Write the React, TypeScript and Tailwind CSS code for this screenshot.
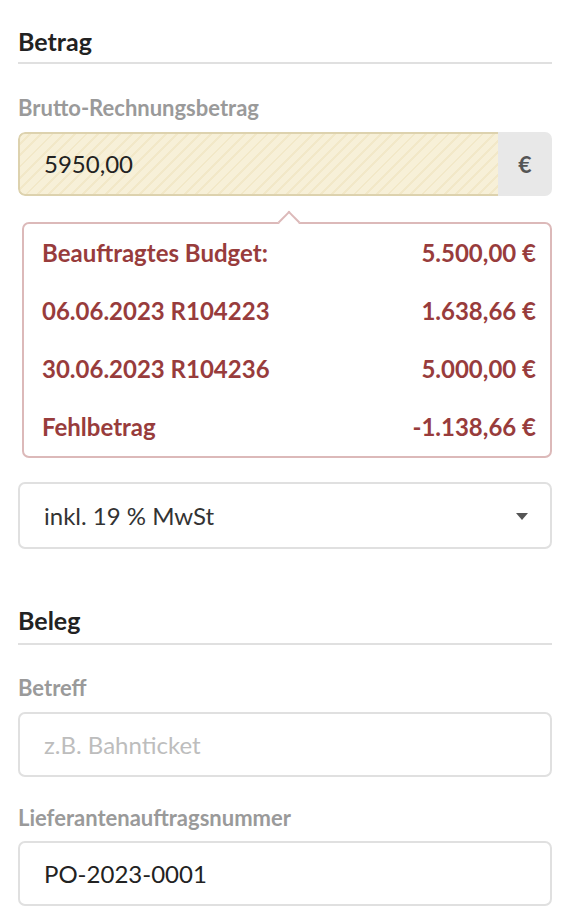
import { useState } from "react";

const rows = [
  { label: "Beauftragtes Budget:", value: "5.500,00 €" },
  { label: "06.06.2023 R104223", value: "1.638,66 €" },
  { label: "30.06.2023 R104236", value: "5.000,00 €" },
  { label: "Fehlbetrag", value: "-1.138,66 €" },
];

const SectionTitle = ({ title, className }: { title: string; className?: string }) => (
  <div className={`border-b-2 border-[#e0e0e0] pb-[6px] ${className ?? ""}`}>
    <h2 className="text-[25px] font-bold leading-[30px] text-[#222]">{title}</h2>
  </div>
);

const Label = ({ text, className }: { text: string; className?: string }) => (
  <label className={`block text-[22px] font-bold leading-[24px] text-[#9a9a9a] ${className ?? ""}`}>{text}</label>
);

const App = () => {
  const [amount, setAmount] = useState("5950,00");
  const [subject, setSubject] = useState("");
  const [order, setOrder] = useState("PO-2023-0001");

  return (
    <div className="min-h-screen bg-white pl-[18px] pr-[22px] pt-[26px] font-['Lato','Noto_Sans',sans-serif]">
      <SectionTitle title="Betrag" />

      <Label text="Brutto-Rechnungsbetrag" className="mt-[32px]" />
      <div className="mt-[12px] flex h-[64px] overflow-hidden rounded-[7px]">
        <input
          value={amount}
          onChange={(e) => setAmount(e.target.value)}
          className="min-w-0 flex-1 rounded-l-[7px] border-2 border-r-0 border-[#ddd2ae] bg-[#f6eed3] bg-[repeating-linear-gradient(135deg,#f7f0d8_0px,#f7f0d8_6px,#f2e8c8_6px,#f2e8c8_8px)] pl-[24px] text-[24px] text-[#222] outline-none"
        />
        <div className="flex w-[54px] items-center justify-center bg-[#e8e8e8] text-[23px] font-bold text-[#555]">€</div>
      </div>

      <div className="relative ml-[4px] mt-[26px] rounded-[7px] border-2 border-[#dcb9b9] bg-white pb-[15px] pl-[18px] pr-[14px] pt-[15px]">
        <div className="absolute left-[257px] top-[-10px] h-[16px] w-[16px] rotate-45 border-l-2 border-t-2 border-[#dcb9b9] bg-white" />
        <div className="flex flex-col gap-[30px]">
          {rows.map((r) => (
            <div key={r.label} className="flex justify-between text-[24px] font-bold leading-[28px] text-[#983c3c]">
              <span>{r.label}</span>
              <span>{r.value}</span>
            </div>
          ))}
        </div>
      </div>

      <div className="relative mt-[24px] flex h-[67px] items-center rounded-[7px] border-2 border-[#e0e0e0] bg-white pl-[24px]">
        <span className="text-[24px] text-[#333]">inkl. 19 % MwSt</span>
        <svg className="absolute right-[22px] top-[29px]" width="12" height="7" viewBox="0 0 12 7">
          <path d="M0 0 L12 0 L6 7 Z" fill="#555" />
        </svg>
      </div>

      <SectionTitle title="Beleg" className="mt-[56px] pb-[8px]" />

      <Label text="Betreff" className="mt-[31px]" />
      <input
        value={subject}
        onChange={(e) => setSubject(e.target.value)}
        placeholder="z.B. Bahnticket"
        className="mt-[12px] block h-[65px] w-full rounded-[7px] border-2 border-[#e0e0e0] bg-white pl-[24px] text-[24px] text-[#222] outline-none placeholder:text-[#bdbdbd]"
      />

      <Label text="Lieferantenauftragsnummer" className="mt-[29px]" />
      <input
        value={order}
        onChange={(e) => setOrder(e.target.value)}
        className="mt-[11px] block h-[65px] w-full rounded-[7px] border-2 border-[#e0e0e0] bg-white pl-[24px] text-[24px] text-[#222] outline-none"
      />
    </div>
  );
};

export default App;
